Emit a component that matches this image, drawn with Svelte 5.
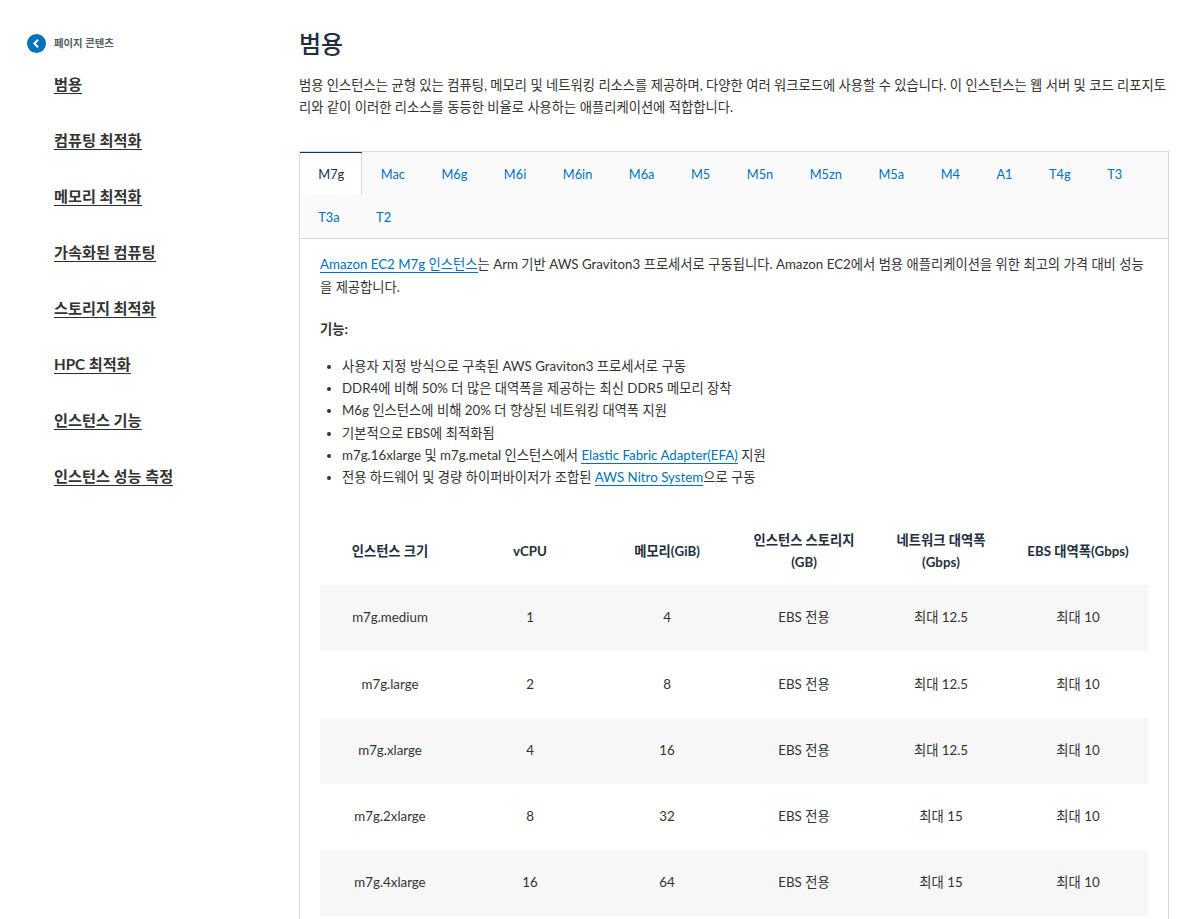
<script>
    const tabs = ['M7g', 'Mac', 'M6g', 'M6i', 'M6in', 'M6a', 'M5', 'M5n', 'M5zn', 'M5a', 'M4', 'A1', 'T4g', 'T3', 'T3a', 'T2']
    const nav = ['범용', '컴퓨팅 최적화', '메모리 최적화', '가속화된 컴퓨팅', '스토리지 최적화', 'HPC 최적화', '인스턴스 기능', '인스턴스 성능 측정']
    const rows = [
        ['m7g.medium', '1', '4', 'EBS 전용', '최대 12.5', '최대 10'],
        ['m7g.large', '2', '8', 'EBS 전용', '최대 12.5', '최대 10'],
        ['m7g.xlarge', '4', '16', 'EBS 전용', '최대 12.5', '최대 10'],
        ['m7g.2xlarge', '8', '32', 'EBS 전용', '최대 15', '최대 10'],
        ['m7g.4xlarge', '16', '64', 'EBS 전용', '최대 15', '최대 10'],
    ]
</script>

<div class="page">
    <aside class="side">
        <div class="side-head">
            <span class="back">
                <svg width="19" height="19" viewBox="0 0 19 19"><path d="M11 5.8 7.4 9.5l3.6 3.7" fill="none" stroke="#fff" stroke-width="2" /></svg>
            </span>
            <span class="side-title">페이지 콘텐츠</span>
        </div>
        <ul class="side-nav">
            {#each nav as item}
                <li><span>{item}</span></li>
            {/each}
        </ul>
    </aside>

    <main class="main">
        <h1>범용</h1>
        <p class="intro">범용 인스턴스는 균형 있는 컴퓨팅, 메모리 및 네트워킹 리소스를 제공하며, 다양한 여러 워크로드에 사용할 수 있습니다. 이 인스턴스는 웹 서버 및 코드 리포지토리와 같이 이러한 리소스를 동등한 비율로 사용하는 애플리케이션에 적합합니다.</p>

        <section class="tabbox">
            <div class="tabs">
                {#each tabs as tab, i}
                    <span class="tab" class:active={i === 0}>{tab}</span>
                {/each}
            </div>
            <div class="panel">
                <p class="lead"><a href="#a">Amazon EC2 M7g 인스턴스</a>는 Arm 기반 AWS Graviton3 프로세서로 구동됩니다. Amazon EC2에서 범용 애플리케이션을 위한 최고의 가격 대비 성능을 제공합니다.</p>
                <p class="feat">기능:</p>
                <ul class="list">
                    <li>사용자 지정 방식으로 구축된 AWS Graviton3 프로세서로 구동</li>
                    <li>DDR4에 비해 50% 더 많은 대역폭을 제공하는 최신 DDR5 메모리 장착</li>
                    <li>M6g 인스턴스에 비해 20% 더 향상된 네트워킹 대역폭 지원</li>
                    <li>기본적으로 EBS에 최적화됨</li>
                    <li>m7g.16xlarge 및 m7g.metal 인스턴스에서 <a href="#a">Elastic Fabric Adapter(EFA)</a> 지원</li>
                    <li>전용 하드웨어 및 경량 하이퍼바이저가 조합된 <a href="#a">AWS Nitro System</a>으로 구동</li>
                </ul>
                <table>
                    <thead>
                        <tr>
                            <th>인스턴스 크기</th>
                            <th>vCPU</th>
                            <th>메모리(GiB)</th>
                            <th>인스턴스 스토리지<br />(GB)</th>
                            <th>네트워크 대역폭<br />(Gbps)</th>
                            <th>EBS 대역폭(Gbps)</th>
                        </tr>
                    </thead>
                    <tbody>
                        {#each rows as row}
                            <tr>
                                {#each row as cell}
                                    <td>{cell}</td>
                                {/each}
                            </tr>
                        {/each}
                    </tbody>
                </table>
            </div>
        </section>
    </main>
</div>

<style>
    :global(body) {
        margin: 0;
        overflow: hidden;
        background: #fff;
    }

    .page {
        display: flex;
        height: 919px;
        overflow: hidden;
        font-family: Lato, "Noto Sans CJK KR", sans-serif;
        color: #333;
        font-size: 13.3px;
        line-height: 22.2px;
    }

    .side {
        width: 299px;
        flex: none;
        padding: 33px 0 0 27px;
        box-sizing: border-box;
    }

    .side-head {
        display: flex;
        align-items: center;
        gap: 8px;
        height: 20px;
    }

    .back {
        width: 19px;
        height: 19px;
        border-radius: 50%;
        background: #0073bb;
        display: flex;
    }

    .side-title {
        font-size: 10.4px;
        font-weight: 700;
        color: #545b64;
    }

    .side-nav {
        list-style: none;
        margin: 19px 0 0;
        padding: 0 0 0 27px;
        display: flex;
        flex-direction: column;
        gap: 32px;
    }

    .side-nav li {
        font-size: 15.2px;
        font-weight: 700;
        line-height: 24px;
    }

    .side-nav span {
        border-bottom: 1px solid #232f3e;
    }

    .main {
        width: 870px;
        flex: none;
    }

    h1 {
        font-size: 24px;
        font-weight: 500;
        line-height: 32px;
        margin: 28px 0 0;
        color: #232f3e;
    }

    .intro {
        margin: 14px 0 0;
    }

    .tabbox {
        margin-top: 33px;
        border: 1px solid #d5dbdb;
    }

    .tabs {
        display: flex;
        flex-wrap: wrap;
        background: #fafafa;
        border-bottom: 1px solid #d5dbdb;
    }

    .tab {
        height: 43px;
        padding: 0 18.25px;
        display: flex;
        align-items: center;
        color: #0073bb;
        font-size: 12.8px;
    }

    .tab.active {
        background: #fff;
        color: #232f3e;
        box-shadow: inset 0 1px 0 #00395f, inset -1px 0 0 #d5dbdb;
    }

    .panel {
        padding: 14px 20px 20px;
    }

    p {
        margin: 0;
    }

    a {
        color: #0073bb;
        text-decoration: none;
        border-bottom: 1px solid #0073bb;
    }

    .feat {
        margin-top: 20px;
        font-weight: 700;
    }

    .list {
        margin: 15px 0 0;
        padding-left: 22px;
    }

    table {
        width: 100%;
        margin-top: 28px;
        border-collapse: collapse;
        table-layout: fixed;
        text-align: center;
    }

    th {
        height: 69px;
        font-weight: 700;
        padding: 0;
        color: #232f3e;
    }

    th:nth-child(even) {
        width: 140px;
    }

    th:nth-child(odd) {
        width: 134px;
    }

    th:first-child {
        width: 140px;
    }

    td {
        height: 64.25px;
        padding: 0 0 2px;
    }

    tbody tr:nth-child(odd) {
        background: #f7f7f7;
    }
</style>
